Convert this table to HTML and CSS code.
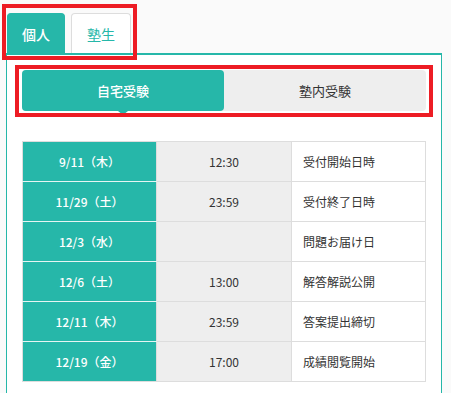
FILE: index.html
```html
<!DOCTYPE html>
<html lang="ja">
<head>
<meta charset="utf-8">
<title>日程</title>
<link rel="stylesheet" href="styles.css">
</head>
<body>
<div class="wrap">
  <div class="tabs">
    <div class="tab tab-active">個人</div>
    <div class="tab">塾生</div>
  </div>
  <div class="panel">
    <div class="seg">
      <div class="seg-btn seg-active">自宅受験</div>
      <div class="seg-btn">塾内受験</div>
    </div>
    <table class="sched">
      <tr><td class="d">9/11（木）</td><td class="t">12:30</td><td class="l">受付開始日時</td></tr>
      <tr><td class="d">11/29（土）</td><td class="t">23:59</td><td class="l">受付終了日時</td></tr>
      <tr><td class="d">12/3（水）</td><td class="t"></td><td class="l">問題お届け日</td></tr>
      <tr><td class="d">12/6（土）</td><td class="t">13:00</td><td class="l">解答解説公開</td></tr>
      <tr><td class="d">12/11（木）</td><td class="t">23:59</td><td class="l">答案提出締切</td></tr>
      <tr><td class="d">12/19（金）</td><td class="t">17:00</td><td class="l">成績閲覧開始</td></tr>
    </table>
  </div>
</div>
<div class="mark mark-tabs"></div>
<div class="mark mark-seg"></div>
</body>
</html>
```
FILE: styles.css
```css
* { box-sizing: border-box; }
html, body { margin: 0; padding: 0; }
body {
  background: #fafafa;
  font-family: "Noto Sans CJK JP", "Noto Sans", sans-serif;
  color: #333;
  width: 451px;
  height: 393px;
  overflow: hidden;
  position: relative;
}
.wrap {
  margin-left: 6px;
  width: 436px;
  padding-top: 13px;
}
.tabs {
  display: flex;
  gap: 6px;
  padding-left: 1px;
}
.tab {
  height: 40px;
  width: 60px;
  display: flex;
  align-items: center;
  justify-content: center;
  font-size: 14px;
  color: #26b7a9;
  background: #fff;
  border: 1px solid #ddd;
  border-bottom: none;
  border-radius: 4px 4px 0 0;
}
.tab-active {
  width: 58px;
  background: #26b7a9;
  border-color: #26b7a9;
  color: #fff;
  font-weight: 500;
}
.panel {
  background: #fff;
  border-top: 2px solid #26b7a9;
  border-left: 1px solid #26b7a9;
  border-right: 1px solid #26b7a9;
  padding: 15px 15px 0;
  height: 340px;
}
.seg {
  display: flex;
  height: 41px;
  background: #eeeeee;
  border-radius: 4px;
}
.seg-btn {
  flex: 1;
  display: flex;
  align-items: center;
  justify-content: center;
  font-size: 13px;
  color: #333;
  position: relative;
  border-radius: 4px;
}
.seg-active {
  background: #26b7a9;
  color: #fff;
  font-weight: 500;
}
.seg-active::after {
  content: "";
  position: absolute;
  left: 50%;
  bottom: -4px;
  margin-left: -5px;
  border-left: 5px solid transparent;
  border-right: 5px solid transparent;
  border-top: 4px solid #26b7a9;
}
.sched {
  margin-top: 30px;
  width: 404px;
  border-collapse: collapse;
  table-layout: fixed;
  font-size: 12px;
}
.sched td {
  height: 40px;
  border: 1px solid #dddddd;
  padding: 0;
}
.sched .d {
  width: 134px;
  background: #26b7a9;
  color: #fff;
  text-align: center;
  font-weight: 500;
  border-top-color: #e6f5f3;
  border-bottom-color: #e6f5f3;
}
.sched tr:first-child .d { border-top-color: #dddddd; }
.sched tr:last-child .d { border-bottom-color: #dddddd; }
.sched .t {
  width: 135px;
  background: #eeeeee;
  text-align: center;
  color: #333;
}
.sched .l {
  background: #fff;
  padding-left: 11px;
  color: #333;
}
.mark {
  position: absolute;
  border: 4px solid #ed1c24;
  pointer-events: none;
}
.mark-tabs {
  left: 2px;
  top: 4px;
  width: 135px;
  height: 56px;
}
.mark-seg {
  left: 15px;
  top: 65px;
  width: 418px;
  height: 52px;
}
```
